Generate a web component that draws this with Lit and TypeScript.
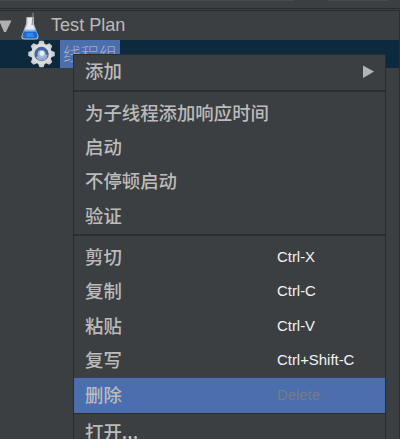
import { LitElement, html, css, svg } from "lit";
import { customElement } from "lit/decorators.js";

interface Entry { label: string; key?: string; sub?: boolean; hot?: boolean }

const GROUPS: Entry[][] = [
  [{ label: "添加", sub: true }],
  [{ label: "为子线程添加响应时间" }, { label: "启动" }, { label: "不停顿启动" }, { label: "验证" }],
  [
    { label: "剪切", key: "Ctrl-X" },
    { label: "复制", key: "Ctrl-C" },
    { label: "粘贴", key: "Ctrl-V" },
    { label: "复写", key: "Ctrl+Shift-C" },
    { label: "删除", key: "Delete", hot: true },
  ],
  [{ label: "打开..." }],
];

@customElement("context-menu")
class ContextMenu extends LitElement {
  static styles = css`
    :host { display: block; box-sizing: border-box; border: 1px solid #2b2c2d; background: #3c3f41; }
    .group { box-sizing: border-box; padding-top: 4px; border-bottom: 2px solid #2c2d2e; }
    .group:first-child { padding: 0 0 1px; }
    .group:nth-child(2) { height: 144px; }
    .group:nth-child(3) { height: 178px; }
    .group:nth-child(4) { padding-top: 1px; }
    .item { display: flex; align-items: center; height: 34.4px; color: #bbb; padding-left: 11px;
      font: 500 18.4px/34px "Noto Sans CJK SC", sans-serif; white-space: nowrap; }
    .group:nth-child(3) .item { height: 34.5px; }
    .label { width: 192px; flex: none; height: 34px; line-height: 31px; }
    .key { font: 14.9px/34px "Liberation Sans", Arial, sans-serif; color: #f2f2f2; height: 34px; line-height: 32px; }
    .group .hot { background: #4b6eaf; height: 34px; }
    .hot .key { color: #777b83; }
    .arrow { margin-left: 85px; width: 12px; height: 14px; }
  `;
  render() {
    return GROUPS.map((g) => html`<div class="group">${g.map((e) => html`
      <div class="item ${e.hot ? "hot" : ""}">
        <span class="label">${e.label}</span>
        ${e.key ? html`<span class="key">${e.key}</span>` : ""}
        ${e.sub ? html`<svg class="arrow" viewBox="0 0 12 14"><path d="M1 .5 12 6.5 8 9 1 13Z" fill="#b4b4b4"/></svg>` : ""}
      </div>`)}</div>`);
  }
}

@customElement("app-root")
class AppRoot extends LitElement {
  static styles = css`
    :host { display: block; position: relative; width: 400px; height: 439px; overflow: hidden; background: #3c3f41; }
    .bar { box-sizing: border-box; height: 9px; border-bottom: 1px solid #292b2c; display: flex; }
    .btn { height: 1px; background: #494c4e; }
    .left { width: 294px; }
    .right { width: 60px; margin-left: 34px; }
    .tree { box-sizing: border-box; margin-top: 1px; height: 429px; border-top: 1px solid #292b2c;
      border-right: 1px solid #2b2d2e; width: 400px; }
    .row { display: flex; align-items: center; height: 29px; }
    .selected { height: 28px; background: #0d293e; padding-left: 26px; }
    .twisty { width: 12px; height: 12px; flex: none; }
    .flask { width: 20px; height: 28px; margin-left: 8px; flex: none; }
    .gear { width: 30px; height: 28px; flex: none; }
    .name { font: 18.1px/28px "Liberation Sans", Arial, sans-serif; color: #bbb; margin: 0 0 2px 11px; }
    .chip { margin-left: 4px; padding: 0 3px; width: 54px; height: 28px; background: #4b6eaf; color: #a8adb8;
      font: 300 18px/26px "Noto Sans CJK SC", sans-serif; white-space: nowrap; }
    context-menu { position: absolute; left: 73px; top: 54px; width: 313px; height: 400px; }
  `;
  render() {
    const teeth = [0, 45, 90, 135, 180, 225, 270, 315];
    return html`
      <div class="bar"><div class="btn left"></div><div class="btn right"></div></div>
      <div class="tree">
        <div class="row">
          <svg class="twisty" viewBox="0 0 12 12"><path d="M-1 .5H11.5L6 12H4Z" fill="#b0b0b0"/></svg>
          <svg class="flask" viewBox="0 0 20 28">
            <path d="M11 6 12 2 12.500 .5H14V6Z" fill="#66696b"/>
            <path d="M6.500 5H14V12L18.500 24Q19 27.500 15 27.500H5Q.5 27.500 1.500 24L6 12Z" fill="#b9bec2"/>
            <path d="M7.500 6H12.500V12L15 18H5L7.500 12Z" fill="#e9ecee"/>
            <path d="M4 18H16L17.500 24Q17.500 26.500 15 26.500H5Q2 26.500 2.500 24Z" fill="#1a6bd0"/>
            <path d="M4.500 17.500H15L16 19.500H4Z" fill="#8fb9e8"/>
            <path d="M7 21H13L14 25H6Z" fill="#2b8cf0"/>
            <path d="M12 13 13 5" stroke="#85898c"/>
          </svg>
          <span class="name">Test Plan</span>
        </div>
        <div class="row selected">
          <svg class="gear" viewBox="0 0 30 28">
            ${teeth.map((a) => svg`<path d="M11.500 6 13.500 .8H17.500L19.500 6Z" fill="#cfd0cf" transform="rotate(${a} 15.5 14)"/>`)}
            <circle cx="15.5" cy="14" r="10.4" fill="#dcdcda"/>
            <circle cx="15.5" cy="14" r="7.2" fill="#42659e"/>
            <path d="M10 17A6 6 0 0 0 21.500 15L17 13Z" fill="#90aad0"/>
            <circle cx="15.5" cy="14" r="4" fill="#a5b9da"/>
            <circle cx="16" cy="13.500" r="2.4" fill="#e6edf5"/>
          </svg>
          <span class="chip">线程组</span>
        </div>
      </div>
      <context-menu></context-menu>`;
  }
}
